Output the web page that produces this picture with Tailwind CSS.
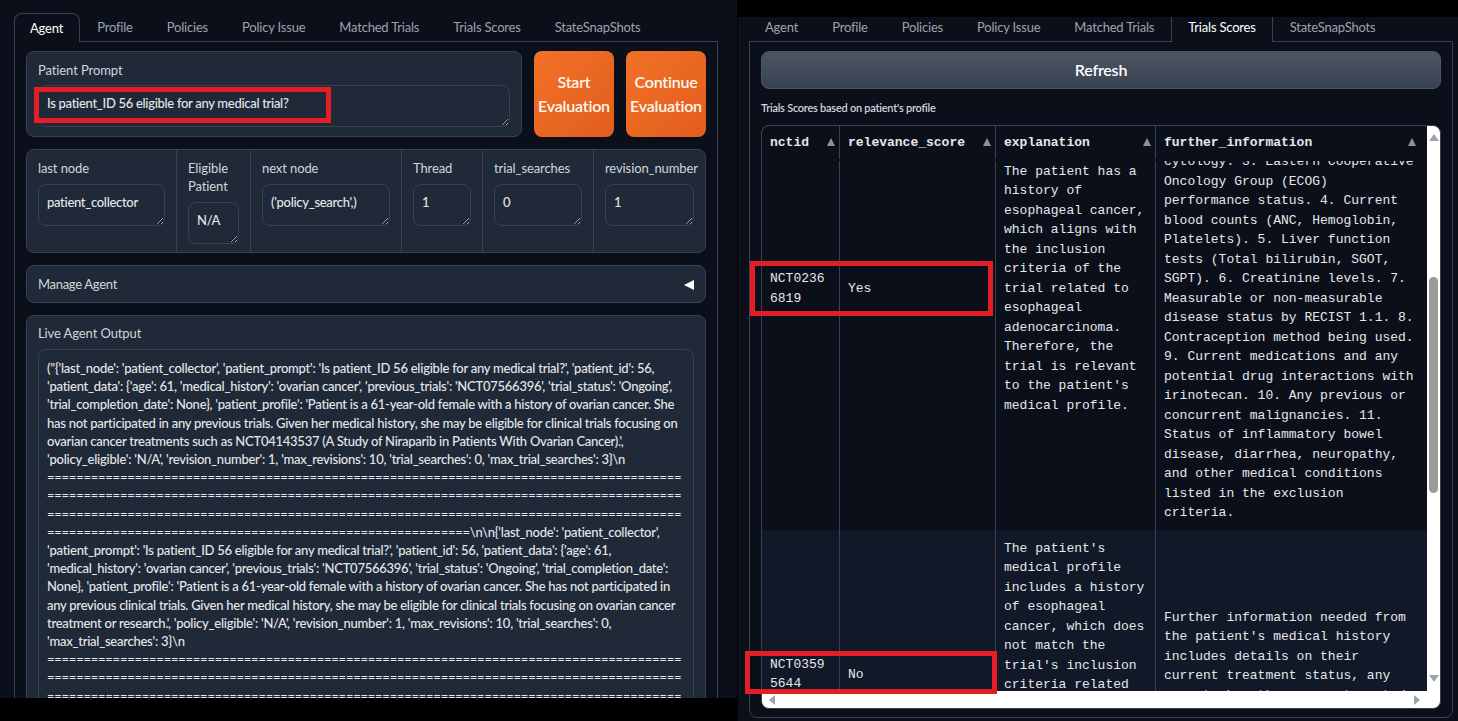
<!DOCTYPE html>
<html lang="en">
<head>
  <meta charset="UTF-8" />
  <title>Agent and Trials Scores</title>
  <script src="https://cdn.jsdelivr.net/npm/@tailwindcss/browser@4"></script>
</head>
<body class="bg-black font-['Lato','Noto_Sans',sans-serif] text-[13px] tracking-[-0.3px] text-[#d1d5db]">
  <div class="relative flex w-[1458px] h-[721px] overflow-hidden bg-black">

    <!-- left capture -->
    <section class="w-[737px] h-[698px] overflow-hidden bg-[#0b0f19] pl-[14px] pr-[19px] pt-[13px]">
      <nav class="flex h-[28px] text-[#9ca3af] tracking-[-0.2px]">
        <div class="pl-[15px] pr-4 pt-[5px] border border-b-0 border-[#374151] rounded-t-lg text-white bg-[#0b0f19] relative z-10 h-[29px]">Agent</div>
        <div class="pl-[17px] pr-[17px] pt-[5px]">Profile</div>
        <div class="px-[17px] pt-[5px]">Policies</div>
        <div class="px-[17px] pt-[5px]">Policy Issue</div>
        <div class="px-[17px] pt-[5px]">Matched Trials</div>
        <div class="px-[17px] pt-[5px]">Trials Scores</div>
        <div class="px-[17px] pt-[5px]">StateSnapShots</div>
      </nav>
      <div class="border border-[#374151] px-[11px] pt-[9px] h-[700px]">
        <div class="flex gap-3 h-[86px]">
          <div class="w-[496px] bg-[#1f2937] border border-[#374151] rounded-lg px-[11px] pt-[9px]">
            <div class="h-[24px] leading-[18px] tracking-[-0.1px]">Patient Prompt</div>
            <textarea readonly class="block w-full h-[42px] [color-scheme:dark] bg-[#1f2937] border border-[#374151] rounded-lg px-2 py-[8px] font-medium text-[#e5e7eb] leading-[18px] outline-none">Is patient_ID 56 eligible for any medical trial?</textarea>
          </div>
          <button class="w-[80px] rounded-lg bg-gradient-to-br from-[#f17126] to-[#e35d1e] text-[#fff7ed] font-semibold text-[16px] leading-[24px] tracking-[-0.2px]">Start Evaluation</button>
          <button class="w-[80px] rounded-lg bg-gradient-to-br from-[#f17126] to-[#e35d1e] text-[#fff7ed] font-semibold text-[16px] leading-[24px] tracking-[-0.2px]">Continue Evaluation</button>
        </div>

        <div class="flex mt-3 h-[104px] bg-[#1f2937] border border-[#374151] rounded-lg divide-x divide-[#374151]">
          <div class="w-[150px] shrink-0 px-[11px] pt-[9px]">
            <div class="leading-[18px] mb-[7px] tracking-[-0.1px]">last node</div>
            <textarea readonly class="block w-full h-[42px] [color-scheme:dark] bg-[#1f2937] border border-[#374151] rounded-lg px-2 py-[8px] font-medium text-[#e5e7eb] leading-[18px] outline-none">patient_collector</textarea>
          </div>
          <div class="w-[74px] shrink-0 px-[11px] pt-[9px]">
            <div class="leading-[18px] mb-[7px] tracking-[-0.1px]">Eligible Patient</div>
            <textarea readonly class="block w-full h-[42px] [color-scheme:dark] bg-[#1f2937] border border-[#374151] rounded-lg px-2 py-[8px] font-medium text-[#e5e7eb] leading-[18px] outline-none">N/A</textarea>
          </div>
          <div class="w-[151px] shrink-0 px-[11px] pt-[9px]">
            <div class="leading-[18px] mb-[7px] tracking-[-0.1px]">next node</div>
            <textarea readonly class="block w-full h-[42px] [color-scheme:dark] bg-[#1f2937] border border-[#374151] rounded-lg px-2 py-[8px] font-medium text-[#e5e7eb] leading-[18px] outline-none">('policy_search',)</textarea>
          </div>
          <div class="w-[81px] shrink-0 px-[11px] pt-[9px]">
            <div class="leading-[18px] mb-[7px] tracking-[-0.1px]">Thread</div>
            <textarea readonly class="block w-full h-[42px] [color-scheme:dark] bg-[#1f2937] border border-[#374151] rounded-lg px-2 py-[8px] font-medium text-[#e5e7eb] leading-[18px] outline-none">1</textarea>
          </div>
          <div class="w-[111px] shrink-0 px-[11px] pt-[9px]">
            <div class="leading-[18px] mb-[7px] tracking-[-0.1px]">trial_searches</div>
            <textarea readonly class="block w-full h-[42px] [color-scheme:dark] bg-[#1f2937] border border-[#374151] rounded-lg px-2 py-[8px] font-medium text-[#e5e7eb] leading-[18px] outline-none">0</textarea>
          </div>
          <div class="flex-1 min-w-0 px-[11px] pt-[9px]">
            <div class="leading-[18px] mb-[7px] whitespace-nowrap tracking-[-0.1px]">revision_number</div>
            <textarea readonly class="block w-full h-[42px] [color-scheme:dark] bg-[#1f2937] border border-[#374151] rounded-lg px-2 py-[8px] font-medium text-[#e5e7eb] leading-[18px] outline-none">1</textarea>
          </div>
        </div>

        <div class="flex items-center justify-between mt-3 h-[38px] bg-[#1f2937] border border-[#374151] rounded-lg pl-[11px] pr-[11px] pt-[2px]">
          <span>Manage Agent</span>
          <span class="w-0 h-0 border-y-[5px] border-y-transparent border-r-[10px] border-r-white"></span>
        </div>

        <div class="mt-3 bg-[#1f2937] border border-[#374151] rounded-lg px-[11px] pt-[8px] h-[500px]">
          <div class="leading-[18px] mb-[7px] tracking-[-0.1px]">Live Agent Output</div>
          <div class="border border-[#374151] rounded-lg px-2 pt-[9px] h-[480px] text-[#e5e7eb] font-medium leading-[18.2px] tracking-[-0.25px] overflow-hidden whitespace-nowrap">
            <div>("{'last_node': 'patient_collector', 'patient_prompt': 'Is patient_ID 56 eligible for any medical trial?', 'patient_id': 56,</div>
            <div>'patient_data': {'age': 61, 'medical_history': 'ovarian cancer', 'previous_trials': 'NCT07566396', 'trial_status': 'Ongoing',</div>
            <div>'trial_completion_date': None}, 'patient_profile': 'Patient is a 61-year-old female with a history of ovarian cancer. She</div>
            <div>has not participated in any previous trials. Given her medical history, she may be eligible for clinical trials focusing on</div>
            <div>ovarian cancer treatments such as NCT04143537 (A Study of Niraparib in Patients With Ovarian Cancer).',</div>
            <div>'policy_eligible': 'N/A', 'revision_number': 1, 'max_revisions': 10, 'trial_searches': 0, 'max_trial_searches': 3}\n</div>
            <div>=======================================================================================</div>
            <div>=======================================================================================</div>
            <div>=======================================================================================</div>
            <div>==========================================================\n\n{'last_node': 'patient_collector',</div>
            <div>'patient_prompt': 'Is patient_ID 56 eligible for any medical trial?', 'patient_id': 56, 'patient_data': {'age': 61,</div>
            <div>'medical_history': 'ovarian cancer', 'previous_trials': 'NCT07566396', 'trial_status': 'Ongoing', 'trial_completion_date':</div>
            <div>None}, 'patient_profile': 'Patient is a 61-year-old female with a history of ovarian cancer. She has not participated in</div>
            <div>any previous clinical trials. Given her medical history, she may be eligible for clinical trials focusing on ovarian cancer</div>
            <div>treatment or research.', 'policy_eligible': 'N/A', 'revision_number': 1, 'max_revisions': 10, 'trial_searches': 0,</div>
            <div>'max_trial_searches': 3}\n</div>
            <div>=======================================================================================</div>
            <div>=======================================================================================</div>
            <div>=======================================================================================</div>
          </div>
        </div>
      </div>
    </section>

    <!-- right capture -->
    <section class="flex-1 ml-[1px] mt-[17px] bg-[#0b0f19] pl-[11px] pr-[5px]">
      <nav class="flex h-[24px] text-[#9ca3af] tracking-[-0.2px]">
        <div class="pl-[16px] pr-[17px] pt-[1px]">Agent</div>
        <div class="px-[17px] pt-[1px]">Profile</div>
        <div class="px-[17px] pt-[1px]">Policies</div>
        <div class="px-[17px] pt-[1px]">Policy Issue</div>
        <div class="px-[17px] pt-[1px]">Matched Trials</div>
        <div class="px-4 pt-[1px] border-x border-[#374151] text-white bg-[#0b0f19] relative z-10 h-[25px]">Trials Scores</div>
        <div class="px-[17px] pt-[1px]">StateSnapShots</div>
      </nav>
      <div class="border border-[#374151] rounded-b-lg px-[11px] pt-[9px] h-[677px]">
        <button class="block w-full h-[38px] rounded-lg bg-gradient-to-b from-[#4b5563] to-[#374151] border border-[#4b5563] text-white font-semibold text-[16px] tracking-[-0.2px]">Refresh</button>
        <div class="mt-[11px] h-[16px] leading-[16px] text-[11px] font-semibold tracking-[-0.25px]">Trials Scores based on patient's profile</div>
        <div class="mt-[9px] h-[584px] border border-[#374151] rounded-lg overflow-hidden bg-white flex flex-col font-['Liberation_Mono',monospace] text-[13px] tracking-normal leading-[19.5px] text-[#e5e7eb]">
          <div class="flex h-[565px]">
            <div class="w-[665px] flex flex-col bg-[#0b0f19]">
              <div class="grid grid-cols-[78px_156px_160px_271px] h-[35px] pb-[2px] font-bold relative z-10 bg-[#0b0f19] divide-x divide-[#374151]">
                <div class="flex items-center justify-between pl-2 pr-[4px]"><span>nctid</span><span class="w-0 h-0 border-x-[4px] border-x-transparent border-b-[8px] border-b-[#8e9299]"></span></div>
                <div class="flex items-center justify-between pl-2 pr-[4px]"><span>relevance_score</span><span class="w-0 h-0 border-x-[4px] border-x-transparent border-b-[8px] border-b-[#8e9299]"></span></div>
                <div class="flex items-center justify-between pl-2 pr-[4px]"><span>explanation</span><span class="w-0 h-0 border-x-[4px] border-x-transparent border-b-[8px] border-b-[#8e9299]"></span></div>
                <div class="flex items-center justify-between pl-2 pr-[11px]"><span>further_information</span><span class="w-0 h-0 border-x-[4px] border-x-transparent border-b-[8px] border-b-[#8e9299]"></span></div>
              </div>
              <div class="h-[531px] overflow-hidden">
                <div class="grid grid-cols-[78px_156px_160px_271px] h-[369px] divide-x divide-[#374151] items-stretch">
                  <div class="flex items-center px-2 break-all -mt-[113px]"><span class="block w-full">NCT02366819</span></div>
                  <div class="flex items-center px-2 -mt-[113px]">Yes</div>
                  <div class="flex items-center px-2 -mt-[114px]">The patient has a history of esophageal cancer, which aligns with the inclusion criteria of the trial related to esophageal adenocarcinoma. Therefore, the trial is relevant to the patient's medical profile.</div>
                  <div class="flex items-end px-2 pb-[7px] overflow-hidden"><span class="block">cytology. 3. Eastern Cooperative Oncology Group (ECOG) performance status. 4. Current blood counts (ANC, Hemoglobin, Platelets). 5. Liver function tests (Total bilirubin, SGOT, SGPT). 6. Creatinine levels. 7. Measurable or non-measurable disease status by RECIST 1.1. 8. Contraception method being used. 9. Current medications and any potential drug interactions with irinotecan. 10. Any previous or concurrent malignancies. 11. Status of inflammatory bowel disease, diarrhea, neuropathy, and other medical conditions listed in the exclusion criteria.</span></div>
                </div>
                <div class="grid grid-cols-[78px_156px_160px_271px] h-[289px] bg-[#111827] divide-x divide-[#374151]">
                  <div class="flex items-center px-2 break-all"><span class="block w-full">NCT03595644</span></div>
                  <div class="flex items-center px-2">No</div>
                  <div class="px-2 pt-[9px]">The patient's medical profile includes a history of esophageal cancer, which does not match the trial's inclusion criteria related</div>
                  <div class="px-2 pt-[78px]">Further information needed from the patient's medical history includes details on their current treatment status, any recent chemotherapy or targeted</div>
                </div>
              </div>
            </div>
            <div class="flex-1 relative">
              <div class="mx-auto mt-[8px] w-0 h-0 border-x-[5px] border-x-transparent border-b-[7px] border-b-[#9ca3af]"></div>
              <div class="mx-auto mt-[136px] w-[9px] h-[216px] rounded-full bg-[#9a9a9a]"></div>
              <div class="mx-auto mt-[182px] w-0 h-0 border-x-[5px] border-x-transparent border-t-[7px] border-t-[#9ca3af]"></div>
            </div>
          </div>
          <div class="flex-1 flex items-center justify-between px-[7px] pr-[20px]">
            <span class="w-0 h-0 border-y-[5px] border-y-transparent border-r-[6px] border-r-[#9ca3af]"></span>
            <span class="w-0 h-0 border-y-[5px] border-y-transparent border-l-[6px] border-l-[#9ca3af]"></span>
          </div>
        </div>
      </div>
    </section>

    <!-- red annotation boxes -->
    <div class="absolute left-[34px] top-[87px] w-[297px] h-[36px] border-[5px] border-[#e31e24]"></div>
    <div class="absolute left-[750px] top-[261px] w-[243px] h-[55px] border-[5px] border-[#e31e24]"></div>
    <div class="absolute left-[745px] top-[651px] w-[252px] h-[43px] border-[5px] border-[#e31e24]"></div>
  </div>
</body>
</html>
